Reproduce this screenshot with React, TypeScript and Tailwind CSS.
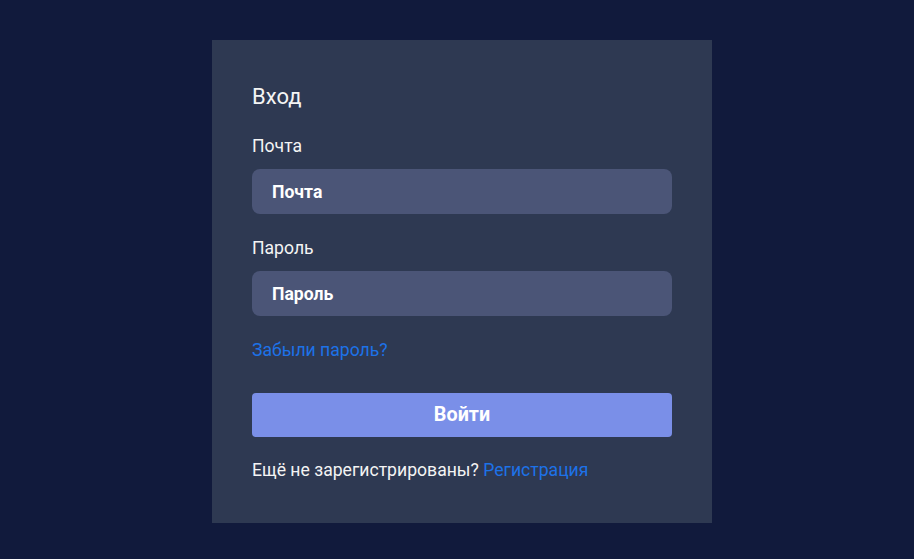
import { FC } from "react";

const App: FC = () => {
  return (
    <div
      className="min-h-screen w-full bg-[#111a3c] flex justify-center pt-10 pl-[10px]"
      style={{ fontFamily: "Roboto, 'Noto Sans', sans-serif" }}
    >
      <div className="w-[500px] h-[483px] bg-[#2e3952] px-10 pt-[43px] pb-[41px] text-[#f4f4f4]">
        <h1 className="text-[22px] leading-[28px] font-normal">Вход</h1>

        <label className="block mt-[23px] text-[17.6px] leading-6">Почта</label>
        <input
          placeholder="Почта"
          className="mt-[11px] w-full h-[45px] rounded-lg bg-[#4b5577] px-5 text-[17.6px] font-bold text-white placeholder:text-white outline-none"
        />

        <label className="block mt-[22px] text-[17.6px] leading-6">Пароль</label>
        <input
          type="password"
          placeholder="Пароль"
          className="mt-[11px] w-full h-[45px] rounded-lg bg-[#4b5577] px-5 text-[17.6px] font-bold text-white placeholder:text-white outline-none"
        />

        <a className="block mt-[22px] text-[17.6px] leading-6 text-[#1d72e8]">
          Забыли пароль?
        </a>

        <button className="mt-[31px] w-full h-[44px] rounded bg-[#7a8fe8] text-[19.8px] font-bold text-white">
          Войти
        </button>

        <p className="mt-[21px] text-[17.6px] leading-6">
          Ещё не зарегистрированы?{" "}
          <a className="text-[#1d72e8]">Регистрация</a>
        </p>
      </div>
    </div>
  );
};

export default App;
